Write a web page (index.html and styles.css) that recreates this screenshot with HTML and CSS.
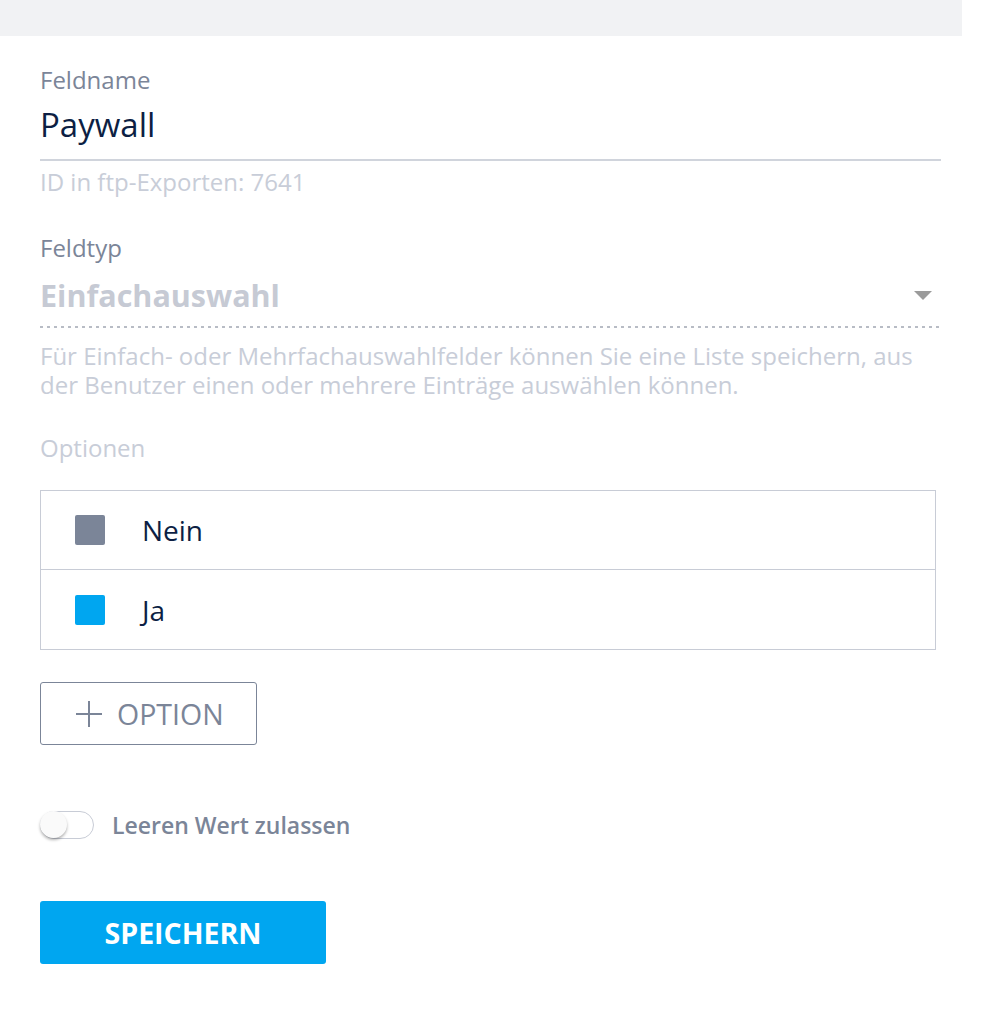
FILE: index.html
```html
<!DOCTYPE html>
<html lang="de">
<head>
<meta charset="utf-8">
<link rel="stylesheet" href="styles.css">
</head>
<body>
<div class="page">
  <div class="topbar"></div>
  <form class="form">
    <div class="field">
      <div class="label">Feldname</div>
      <div class="input">Paywall</div>
      <div class="hint">ID in ftp-Exporten: 7641</div>
    </div>
    <div class="field field-type">
      <div class="label">Feldtyp</div>
      <div class="select">
        <span class="select-value">Einfachauswahl</span>
        <span class="caret"></span>
      </div>
      <div class="desc">Für Einfach- oder Mehrfachauswahlfelder können Sie eine Liste speichern, aus der Benutzer einen oder mehrere Einträge auswählen können.</div>
    </div>
    <div class="options-label">Optionen</div>
    <div class="options">
      <div class="option"><span class="swatch swatch-grey"></span><span class="option-text">Nein</span></div>
      <div class="option"><span class="swatch swatch-blue"></span><span class="option-text">Ja</span></div>
    </div>
    <button type="button" class="btn-add">
      <svg class="plus" width="28" height="28" viewBox="0 0 28 28"><path d="M14 1v26M1 14h26" stroke="#7b8598" stroke-width="2" fill="none"/></svg>
      <span>OPTION</span>
    </button>
    <label class="toggle-row">
      <span class="toggle"><span class="knob"></span></span>
      <span class="toggle-label">Leeren Wert zulassen</span>
    </label>
    <button type="button" class="btn-save">SPEICHERN</button>
  </form>
</div>
</body>
</html>
```
FILE: styles.css
```css
* { box-sizing: border-box; }
html, body { margin: 0; padding: 0; background: #fff; }
body { font-family: "Open Sans", "Noto Sans", sans-serif; color: #0d1f44; }
.page { width: 962px; }
.topbar { height: 36px; background: #f1f2f4; }
.form { padding: 0 21px 40px 40px; display: flex; flex-direction: column; align-items: flex-start; }
.field { width: 901px; }
.label { font-size: 24px; line-height: 30px; color: #7b8598; margin-top: 29px; }
.input { font-size: 33px; line-height: 44px; color: #0d1f44; margin-top: 8px; padding-bottom: 12px; border-bottom: 2px solid #d0d4dc; }
.hint { font-size: 24px; line-height: 30px; color: #c8cdd8; margin-top: 6px; }
.field-type .label { margin-top: 36px; }
.select { display: flex; align-items: center; justify-content: space-between; height: 40px; margin-top: 12px; margin-bottom: 11px; }
.select-value { font-size: 30.5px; line-height: 40px; font-weight: 700; color: #c6cad4; }
.caret { width: 0; height: 0; border-left: 9.5px solid transparent; border-right: 9.5px solid transparent; border-top: 9px solid #9b9b9b; margin-right: 9px; }
.desc { font-size: 24px; line-height: 29px; color: #c8cdd8; padding-top: 15px; width: 901px; background-image: repeating-linear-gradient(to right, #b8bcc5 0, #b8bcc5 3px, transparent 3px, transparent 7px); background-size: 100% 2px; background-repeat: no-repeat; background-position: 0 0; }
.options-label { font-size: 24px; line-height: 30px; color: #c8cdd8; margin-top: 34px; }
.options { width: 896px; margin-top: 27px; }
.option { height: 80px; border: 1px solid #c8ccd6; display: flex; align-items: center; padding-left: 34px; }
.option + .option { border-top: none; }
.swatch { width: 30px; height: 30px; border-radius: 2px; }
.swatch-grey { background: #7b8598; }
.swatch-blue { background: #00a6f0; }
.option-text { margin-left: 37px; font-size: 28px; color: #0d1f44; }
.btn-add { margin-top: 32px; height: 63px; width: 217px; border: 1.5px solid #7b8598; border-radius: 3px; background: #fff; display: flex; align-items: center; padding: 0 0 0 34px; gap: 14px; font-family: inherit; font-size: 28.5px; font-weight: 500; color: #7b8598; }
.plus { display: block; }
.toggle-row { margin-top: 66px; display: flex; align-items: center; gap: 18px; }
.toggle { position: relative; width: 54px; height: 28px; border: 1.5px solid #c8ccd6; border-radius: 14px; background: #fff; }
.knob { position: absolute; left: -1px; top: -1px; width: 27px; height: 27px; border-radius: 50%; background: #fafafa; box-shadow: 0 2px 3px rgba(0,0,0,0.3); }
.toggle-label { font-size: 23px; line-height: 28px; font-weight: 600; color: #7b8598; }
.btn-save { margin-top: 62px; width: 286px; height: 63px; border: none; border-radius: 3px; background: #00a6f0; color: #fff; font-family: inherit; font-size: 28.5px; font-weight: 700; }
```
